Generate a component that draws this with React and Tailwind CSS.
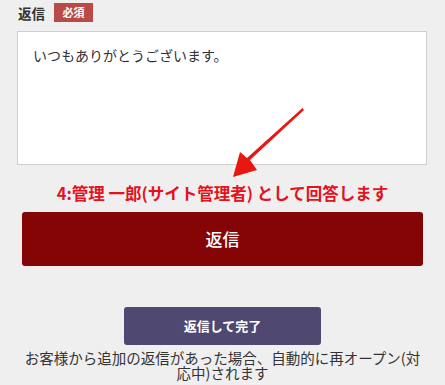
export default function App() {
  const jp = { fontFamily: '"Noto Sans CJK JP", "Noto Sans", sans-serif' };
  return (
    <div className="relative h-[385px] w-[445px] overflow-hidden bg-[#efefef] text-[#333]" style={jp}>
      {/* Label */}
      <div className="flex items-center gap-[9px] pl-[18px] pt-[3px]">
        <span className="text-[13.5px] font-bold leading-[18px]">返信</span>
        <span className="flex h-[19px] w-[39px] items-center justify-center bg-[#b94a48] text-[11px] font-bold leading-none text-white">
          必須
        </span>
      </div>

      {/* Textarea */}
      <div className="ml-[17px] mt-[9px] h-[134px] w-[410px] border border-[#cfcfcf] bg-white px-[15px] pt-[13px] text-[14px] leading-[20px] text-[#333]">
        いつもありがとうございます。
      </div>

      {/* Respondent */}
      <div className="mt-[18px] text-center text-[16.5px] font-bold leading-[20px] text-[#e6101e]">
        4:管理 一郎(サイト管理者) として回答します
      </div>

      {/* Reply button */}
      <div className="mx-[22px] mt-[9px] flex h-[54px] items-center justify-center rounded-[3px] bg-[#850406] text-[17px] font-medium text-white">
        返信
      </div>

      {/* Reply and close */}
      <div className="mt-[41px] flex justify-center">
        <div className="flex h-[38px] w-[197px] items-center justify-center rounded-[3px] bg-[#4f4870] text-[13px] font-bold text-white">
          返信して完了
        </div>
      </div>

      <p className="mx-[22px] mt-[5px] text-center text-[14.5px] leading-[15px] text-[#333]">
        お客様から追加の返信があった場合、自動的に再オープン(対応中)されます
      </p>

      {/* Annotation arrow */}
      <svg className="absolute left-0 top-0" width="445" height="385" viewBox="0 0 445 385">
        <polygon
          points="302.5,108 304,110 250,160 257,170 233,177 240,152 247,158"
          fill="#e8170f"
        />
      </svg>
    </div>
  );
}
